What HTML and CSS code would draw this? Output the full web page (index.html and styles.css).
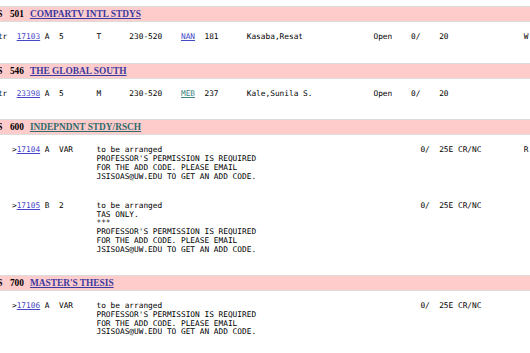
FILE: index.html
```html
<!DOCTYPE html>
<html lang="en">
<head>
<meta charset="utf-8">
<title>Time Schedule</title>
<link rel="stylesheet" href="styles.css">
</head>
<body>
<div class="page">
  <section class="course">
    <div class="course-bar"><b class="dept">JSIS</b><b class="num">501</b><b class="title"><a class="link-new" href="#">COMPARTV INTL STDYS</a></b></div>
<pre class="sect">Restr  <a class="sln" href="#">17103</a> A  5       T      230-520    <a class="bldg" href="#">NAN</a>  181      Kasaba,Resat               Open    0/    20                W</pre>
  </section>

  <section class="course">
    <div class="course-bar"><b class="dept">JSIS</b><b class="num">546</b><b class="title"><a class="link-new" href="#">THE GLOBAL SOUTH</a></b></div>
<pre class="sect">Restr  <a class="sln" href="#">23398</a> A  5       M      230-520    <a class="bldg-v" href="#">MEB</a>  237      Kale,Sunila S.             Open    0/    20</pre>
  </section>

  <section class="course">
    <div class="course-bar"><b class="dept">JSIS</b><b class="num">600</b><b class="title"><a class="link-v" href="#">INDEPNDNT STDY/RSCH</a></b></div>
<pre class="sect">      &gt;<a class="sln" href="#">17104</a> A  VAR     to be arranged                                                       0/  25E CR/NC         R
                        PROFESSOR'S PERMISSION IS REQUIRED
                        FOR THE ADD CODE. PLEASE EMAIL
                        JSISOAS@UW.EDU TO GET AN ADD CODE.</pre>
<pre class="sect">      &gt;<a class="sln" href="#">17105</a> B  2       to be arranged                                                       0/  25E CR/NC
                        TAS ONLY.
                        ***
                        PROFESSOR'S PERMISSION IS REQUIRED
                        FOR THE ADD CODE. PLEASE EMAIL
                        JSISOAS@UW.EDU TO GET AN ADD CODE.</pre>
  </section>

  <section class="course">
    <div class="course-bar"><b class="dept">JSIS</b><b class="num">700</b><b class="title"><a class="link-new" href="#">MASTER'S THESIS</a></b></div>
<pre class="sect">      &gt;<a class="sln" href="#">17106</a> A  VAR     to be arranged                                                       0/  25E CR/NC
                        PROFESSOR'S PERMISSION IS REQUIRED
                        FOR THE ADD CODE. PLEASE EMAIL
                        JSISOAS@UW.EDU TO GET AN ADD CODE.</pre>
  </section>
</div>
</body>
</html>
```

FILE: styles.css
```css
html, body {
  margin: 0;
  padding: 0;
  background: #ffffff;
  overflow: hidden;
}

.page {
  margin-left: -16.2px;
  padding-top: 6px;
  width: 600px;
}

.course-bar {
  display: flex;
  align-items: center;
  height: 14px;
  background: #ffcccc;
  border-top: 1px solid #dcdcdc;
  border-bottom: 1px solid #dcdcdc;
  margin-bottom: 11.3px;
  font-family: "Liberation Serif", "Times New Roman", serif;
  font-size: 9.36px;
  color: #000;
  white-space: nowrap;
}

.num {
  margin-left: 7.4px;
}

.title {
  margin-left: 6px;
}

.link-new {
  color: #3a3aa0;
  text-decoration: underline;
}

.link-v {
  color: #2f6b6b;
  text-decoration: underline;
}

.sect {
  margin: 0 0 20.5px;
  font-family: "DejaVu Sans Mono", "Liberation Mono", monospace;
  font-size: 7.8px;
  line-height: 8.75px;
  color: #000;
  white-space: pre;
}

.sln {
  color: #4646c8;
  text-decoration: underline;
}

.bldg {
  color: #4646c8;
  text-decoration: underline;
}

.bldg-v {
  color: #3a8585;
  text-decoration: underline;
}
```
